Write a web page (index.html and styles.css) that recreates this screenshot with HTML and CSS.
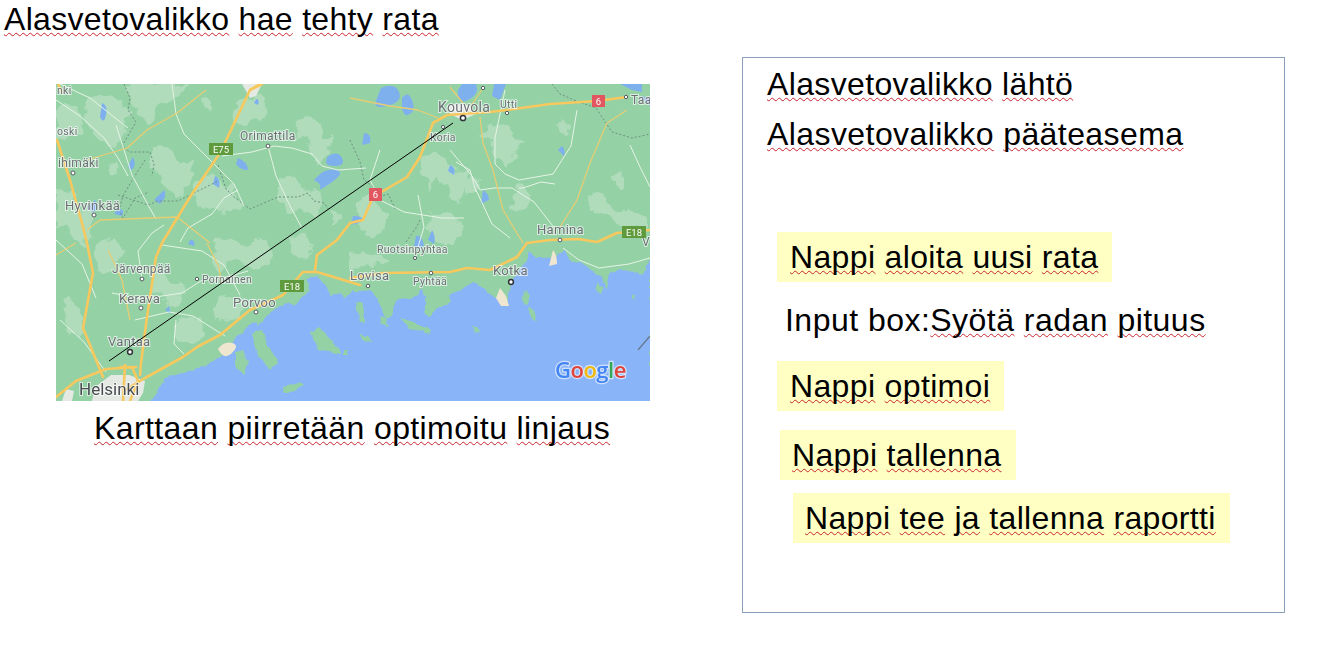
FILE: index.html
```html
<!DOCTYPE html>
<html lang="fi">
<head>
<meta charset="utf-8">
<title>Alasvetovalikko</title>
<link rel="stylesheet" href="styles.css">
</head>
<body>
<main class="page">
  <section class="left">
    <h1 class="line title"><span class="sp">Alasvetovalikko</span> <span class="sp">hae</span> <span class="sp">tehty</span> <span class="sp">rata</span></h1>
    <svg class="map" viewBox="56 84 594 317" width="594" height="317" role="img" aria-label="Kartta">
      <defs>
        <filter id="rough" x="-5%" y="-5%" width="110%" height="110%">
          <feTurbulence type="fractalNoise" baseFrequency="0.07" numOctaves="3" seed="4"/>
          <feDisplacementMap in="SourceGraphic" scale="14" xChannelSelector="R" yChannelSelector="G"/>
        </filter>
        <filter id="rough-small" x="-5%" y="-5%" width="110%" height="110%">
          <feTurbulence type="fractalNoise" baseFrequency="0.12" numOctaves="2" seed="9"/>
          <feDisplacementMap in="SourceGraphic" scale="6" xChannelSelector="R" yChannelSelector="G"/>
        </filter>
      </defs>
      <g class="soft">
        <rect class="land" x="56" y="84" width="594" height="317"/>
        <g class="light rough">
          <path d="M56 110q18-8 26 4t-4 22l-22 4z"/>
          <path d="M90 96q20-6 30 4t10 14-8 22-26 0-6-40z"/>
          <path d="M130 84h60q-6 14-22 18t-14 16-14-4-10-30z"/>
          <path d="M150 150q20-8 26 6t14 8-2 20-18 6-20-20z"/>
          <path d="M56 190q16-4 18 10t12 10 4 20-16 6-18-8z"/>
          <path d="M100 240q14-6 20 8t-6 20-16 4-4-20z"/>
          <path d="M240 100q18-8 24 4t-2 16-18 4-10-14z"/>
          <path d="M195 180q12-12 20-2t14 8 10 14-14 12-20-2-14-20z"/>
          <path d="M280 180q14-8 20 4t14 6 8 14-16 10-18-2-10-22z"/>
          <path d="M150 275q14-6 18 2t12 6 2 14-14 6-18-10z"/>
          <path d="M215 240q14-4 22 4t18-2 16 8-10 18-20-4-18 4-10-20z"/>
          <path d="M180 320q14-6 20 0t4 14-18 8-12-12z"/>
          <path d="M300 120q16-6 20 8t10 6-2 18-16 0-18-10z"/>
          <path d="M360 200q10-8 20 2t6 22-16 10-12-14z"/>
          <path d="M425 155q14-6 22 8t16 6 2 18-18 4-14-8-12-14z"/>
          <path d="M490 125q16-4 22 8t10 10-8 14-20-4-14-14z"/>
          <path d="M465 178q12-6 14 4t-2 12-12 0z"/>
          <path d="M515 185q10-6 14 10t-6 18-10-10z"/>
          <path d="M590 195q12-2 20 8t18 8 20 10v8l-30-6-26-14z"/>
          <path d="M430 215q14-6 24 4t2 20-18 4-12-12z"/>
          <path d="M290 240q10-8 18-2t6 14-14 6-12-8z"/>
          <path d="M220 300q10-8 20-4t2 14-18 12-10-12z"/>
          <path d="M350 255q16-4 30 2t-6 10-24 2z"/>
          <path d="M64 300q12-4 16 10t0 30l-14-4z"/>
          <path d="M560 120q8-4 10 6t-4 10-8-8z"/>
          <path d="M615 175q8-4 10 4t-2 10-8-4z"/>
          <path d="M260 330q8-4 12 8t0 24-10-4z"/>
          <path d="M200 100q8-2 10 6t-6 6z"/>
          <path d="M108 165q6-2 8 6t-6 4z"/>
          <path d="M330 210q6-4 10 4t-6 8z"/>
        </g>
        <g class="urban">
          <path d="M92 401l3-14 16-12 18 0 16 6-2 12-5 8z"/>
          <path d="M62 401l4-12 8 2-2 10z"/>
          <path d="M446 106q14-4 24 0l6 8-14 6-12-6z"/>
          <path d="M242 84h20l-6 12-6 2z"/>
        </g>
        <g class="water">
          <path d="M102 103q6 2 4 12t-6 2zM133 157q4 8-1 13-6 0-2-8zM164 190q4 6-4 14l-6-4zM95 200q6 8-2 12l-6-4zM118 208q8 2 4 8l-8-2z"/>
          <path d="M238 158q10 4 10 12-8 0-12-6zM215 176q6 2 4 12l-6-4zM256 99q4 0 2 6l-4-2z"/>
          <path d="M328 156q10-6 14 2t-8 8-6-10zM318 176q8-8 18-6t-4 12-12 6-6-8z"/>
          <path d="M381 88q14-6 18 4t-12 14-10-8zM402 98q6-8 10 2t-2 14-8-6zM462 84h14q4 10-8 16t-10-10zM494 84h12l-6 16-8-4zM364 133q8 0 6 10l-8 2z"/>
          <path d="M562 146q4 4 2 10l-6-6zM483 190q6 4 6 10-10 4-8 6zM450 165q6 2 4 10l-6-4z"/>
          <path d="M416 236q6-2 8 10-6 6-10 0zM353 216q10 0 10 4-8 6-12 4zM432 230q4 6 2 14l-6-4z"/>
          <path d="M620 84h22v8l-10-2zM640 96l10 2v8z"/>
          <path d="M190 240q6 0 4 6l-6-2zM165 310l4-4 2 8z"/>
        </g>
        <path class="sea rough-small" d="M150 401L160 388 166 378 188 371 205 366 222 355 232 343 240 335 247 328 252 322 258 325 262 322 270 312 280 306 288 302 296 306 300 300 310 290 308 280 317 276 325 285 330 295 340 293 345 300 352 290 360 292 370 290 378 300 385 318 392 316 395 300 405 298 412 300 420 290 430 298 450 295 460 290 473 282 483 287 493 297 507 303 512 283 520 270 527 260 527 250 537 257 553 258 563 250 570 260 583 263 597 273 607 288 610 273 623 270 643 275 650 260V405H150z"/>
        <g class="land rough-small">
          <path d="M236 352l8-2 4 12-4 12-8-6z"/>
          <path d="M252 332l10-2 6 16 10 16-8 8-12-14z"/>
          <path d="M283 386l16-4 6 4-14 6-8 0z"/>
          <path d="M310 332l10-4 12 12 10 14-14-2-10-2z"/>
          <path d="M344 350l4 0 0 6-4 0z"/>
          <path d="M356 302l6 2 2 20-4 0z"/>
          <path d="M360 333l8 4 4 6-8-2z"/>
          <path d="M380 316l6 2 2 8-6-2z"/>
          <path d="M400 318l14 4 16 8 0 4-20-6z"/>
          <path d="M425 297l24-2 2 8-12 4-10 10-4-6z"/>
          <path d="M473 326l4 2 3 6-6-2z"/>
          <path d="M525 290l4 6-3 10-3-6z"/>
          <path d="M529 308l5 2 3 12-5-2z"/>
          <path d="M597 282l6 6-2 6-6-6z"/>
          <path d="M632 295l3 2-1 4z"/>
        </g>
        <path class="sand" d="M218 349q6-8 14-6t0 10-14-4zM500 288l6 8 3 10-8 0-5-8zM553 250q4 4 4 14l-8 2z"/>
        <g class="borders">
          <path d="M124 84l6 14-2 12 8 12-14 24 8 6 20 0 4 12-2 12"/>
          <path d="M145 160l-14 22-8 14-4 14 4 8 12-20 14-6"/>
          <path d="M118 195l30 10 10-4 20 0 24-12 16-8"/>
          <path d="M218 165l8 24 8 8 16 12 14-6 14-6 20 0 10-4 6 8 10 2 6 8"/>
          <path d="M350 140l10 22 4 18 8 6 10 10 6-2 8 16"/>
          <path d="M552 84l8 10 14 6 22 8 16 24 20 6 18-4"/>
          <path d="M420 220l-4 8-10 14"/>
        </g>
        <g class="road">
          <path d="M56 100l24 16 24 22 14 20 10 18"/>
          <path d="M116 125l16 50 16 30 8 14"/>
          <path d="M172 84l4 30 8 20 22 22 28 28 10 22"/>
          <path d="M222 156l30-4 22-6 18 2 20 6 10 12 16 4 28-2"/>
          <path d="M268 146l8 30 14 30 12 22"/>
          <path d="M238 190l-14 8-12 16-24 14-8 14"/>
          <path d="M162 245l40 6 22 14 16 30"/>
          <path d="M56 240l26 24 14 34"/>
          <path d="M142 279l-4-28 14-18 12-8"/>
          <path d="M112 293l30 6 40-6 22-14 24-2 20-6"/>
          <path d="M135 320l34-8 24 4 32 20"/>
          <path d="M176 320l-2 24 10 10"/>
          <path d="M450 150l22 26 8 14 14-2 18 0 22 14 22 28"/>
          <path d="M555 184l-14-2-18 6-4 0"/>
          <path d="M505 90l-10 48 0 26 10 10 14 6 34-6 18-28 6-36"/>
          <path d="M380 150l-10 30 10 20 24 12 38 6 22 0"/>
          <path d="M476 192l-6-22-14-8"/>
          <path d="M418 195l6 32 -6 20"/>
          <path d="M476 190l16 34 18 14"/>
          <path d="M60 84l30 14 38 30"/>
          <path d="M563 248l16 12 20 8 30-4 21-6"/>
          <path d="M630 145l10 22 10 20"/>
          <path d="M60 320l24 22 22 30"/>
        </g>
        <g class="minor">
          <path d="M206 90l-29 23-30 17-20 18-40 12"/>
          <path d="M87 230l13-10 77-3 33 26"/>
          <path d="M480 117l3 26 10 27 10 40 20 33"/>
          <path d="M627 110l-20 13-17 40-13 37-17 27"/>
          <path d="M450 87l13 16M483 88l-12 18M350 98l40 8 28 4 20 8"/>
          <path d="M108 250l14 30 8 40M56 255l20-12"/>
          <path d="M207 243l12 24 2 16"/>
        </g>
        <g class="highway">
          <path d="M140 375l1-12 6-46 9-60 6-14 28-46 30-44 30-63 12-7"/>
          <path d="M57 140l13 40 13 47 4 16 6 30-10 55 20 49"/>
          <path d="M56 397l20-16 30-12 30-2"/>
          <path d="M120 367l12 0 6 14-8 20M125 365l-2 36"/>
          <path d="M125 390l20-12 38-21 14-10 23-12 30-25 33-15 20-23h14l43 13"/>
          <path d="M350 278l33-5 67-1 17-4 23 2 27-13 10-14 23-3 28-1 19 3 20-9 33-3"/>
          <path d="M315 270l2-15 20-15 13-17 13-3 10-23 34-20 13-20 13-34 14-8 43-3 17-2 43-6 47-3 30-4"/>
          <path d="M58 84l4 8M262 84l-12 6"/>
        </g>
        <g class="cities">
          <circle class="big" cx="463" cy="118" r="2.6"/>
          <circle class="big" cx="130" cy="352" r="2.4"/>
          <circle class="big" cx="511" cy="282" r="2.4"/>
          <circle cx="507" cy="113" r="1.7"/><circle cx="483" cy="88" r="1.7"/><circle cx="626" cy="97" r="1.7"/>
          <circle cx="268" cy="146" r="1.9"/><circle cx="73" cy="173" r="2"/><circle cx="94" cy="215" r="2"/>
          <circle cx="142" cy="279" r="1.9"/><circle cx="141" cy="308" r="2"/><circle cx="197" cy="279" r="1.7"/>
          <circle cx="256" cy="312" r="2"/><circle cx="443" cy="127" r="1.6"/><circle cx="560" cy="240" r="1.9"/>
          <circle cx="368" cy="286" r="1.8"/><circle cx="415" cy="258" r="1.6"/><circle cx="431" cy="273" r="1.8"/>
        </g>
        <g class="labels">
          <text class="l14" x="438" y="112">Kouvola</text>
          <text class="l11" x="500" y="108">Utti</text>
          <text class="l12" x="631" y="104">Taa</text>
          <text class="l11" x="430" y="141">Koria</text>
          <text class="l13" x="537" y="234">Hamina</text>
          <text class="l12" x="240" y="140">Orimattila</text>
          <text class="l13" x="65" y="210">Hyvinkää</text>
          <text class="l12" x="58" y="167">ihimäki</text>
          <text class="l11" x="57" y="135">oski</text>
          <text class="l11" x="57" y="94">nki</text>
          <text class="l12" x="112" y="273">Järvenpää</text>
          <text class="l13" x="119" y="303">Kerava</text>
          <text class="l11" x="202" y="283">Pornainen</text>
          <text class="l13" x="233" y="307">Porvoo</text>
          <text class="l13" x="108" y="346">Vantaa</text>
          <text class="l16" x="79" y="395">Helsinki</text>
          <text class="l13" x="350" y="280">Lovisa</text>
          <text class="l11" x="377" y="253">Ruotsinpyhtaa</text>
          <text class="l11" x="413" y="285">Pyhtää</text>
          <text class="l13" x="493" y="275">Kotka</text>
          <text class="l12" x="642" y="246">V</text>
        </g>
        <g class="shield-green">
          <rect x="209" y="143" width="24" height="12"/>
          <rect x="280" y="280" width="24" height="12"/>
          <rect x="622" y="226" width="24" height="12"/>
        </g>
        <g class="shield-red">
          <rect x="592" y="95" width="13" height="12"/>
          <rect x="369" y="188" width="13" height="13"/>
        </g>
        <g class="shield-text">
          <text x="221" y="153">E75</text>
          <text x="292" y="290">E18</text>
          <text x="634" y="236">E18</text>
          <text x="598.500" y="105">6</text>
          <text x="375.500" y="198">6</text>
        </g>
        <text class="google" x="555" y="378"><tspan class="g-blue">G</tspan><tspan class="g-red">o</tspan><tspan class="g-yellow">o</tspan><tspan class="g-blue">g</tspan><tspan class="g-green">l</tspan><tspan class="g-red">e</tspan></text>
        <line class="tick" x1="638" y1="350" x2="650" y2="336"/>
      </g>
      <line class="track" x1="109" y1="361" x2="453" y2="123"/>
    </svg>
    <p class="line caption"><span class="sp">Karttaan</span> <span class="sp">piirretään</span> <span class="sp">optimoitu</span> <span class="sp">linjaus</span></p>
  </section>
  <section class="panel">
    <p class="line drop"><span class="sp">Alasvetovalikko</span> <span class="sp">lähtö</span></p>
    <p class="line drop second"><span class="sp">Alasvetovalikko</span> <span class="sp">pääteasema</span></p>
    <div class="btn b-new"><span class="sp">Nappi</span> <span class="sp">aloita</span> <span class="sp">uusi</span> <span class="sp">rata</span></div>
    <p class="line input">Input box:<span class="sp">Syötä</span> <span class="sp">radan</span> <span class="sp">pituus</span></p>
    <div class="btn b-opt"><span class="sp">Nappi</span> <span class="sp">optimoi</span></div>
    <div class="btn b-save"><span class="sp">Nappi</span> <span class="sp">tallenna</span></div>
    <div class="btn b-report"><span class="sp">Nappi</span> <span class="sp">tee</span> <span class="sp">ja</span> <span class="sp">tallenna</span> <span class="sp">raportti</span></div>
  </section>
</main>
</body>
</html>
```
FILE: styles.css
```css
html, body { margin: 0; padding: 0; background: #fff; }
body { font-family: "Liberation Sans", Arial, sans-serif; color: #000; overflow: hidden; }
.page { display: flex; align-items: flex-start; width: 1321px; height: 648px; }
.left { width: 742px; flex: none; }
.line, .btn { margin: 0; font-size: 32px; line-height: 40px; font-weight: 400; white-space: nowrap; letter-spacing: .35px; }
.sp { text-decoration: underline wavy #c8242c 1px; text-underline-offset: 2px; text-decoration-skip-ink: none; }

.title { height: 40px; margin-top: -1px; padding-left: 4px; letter-spacing: .32px; }
.map { display: block; margin: 45px 0 0 56px; }
.caption { margin: 7px 0 0 94px; letter-spacing: .39px; }

.panel { flex: none; box-sizing: border-box; width: 543px; height: 556px; margin-top: 57px; border: 1px solid #8aa0bd; padding-top: 6px; }
.drop { margin-left: 24px; }
.second { margin-top: 10px; letter-spacing: .42px; }
.btn { box-sizing: border-box; height: 50px; padding: 5px 0 5px 13px; background: #ffffc4; }
.b-new { width: 335px; margin: 78px 0 0 34px; }
.input { margin: 18px 0 0 42px; letter-spacing: .47px; }
.b-opt { width: 227px; margin: 21px 0 0 34px; }
.b-save { width: 236px; margin: 19px 0 0 37px; padding-left: 12px; }
.b-report { width: 437px; margin: 13px 0 0 50px; padding-left: 12px; }

.soft { filter: blur(.5px); }
.rough { filter: url(#rough); }
.rough-small { filter: url(#rough-small); }
.land { fill: #94d2a6; }
.light path { fill: #b0dcbc; }
.urban path { fill: #e4e9e4; }
.water path { fill: #7fb0ee; }
.sea { fill: #8ab4f8; }
.sand { fill: #efe6d0; }
.borders path { fill: none; stroke: #6f8f80; stroke-width: 1; stroke-dasharray: 2 2; }
.road path { fill: none; stroke: #e6f3e6; stroke-width: 1; stroke-linejoin: round; }
.minor path { fill: none; stroke: #e6cd74; stroke-width: 1.3; stroke-linejoin: round; }
.highway path { fill: none; stroke: #f7c85e; stroke-width: 2.6; stroke-linejoin: round; stroke-linecap: round; }
.cities circle { fill: #fff; stroke: #555b5e; stroke-width: 1; }
.cities .big { stroke: #30343a; stroke-width: 1.5; }
.labels text { fill: #6b7074; stroke: #fff; stroke-opacity: .65; stroke-width: 2px; paint-order: stroke; font-family: Roboto, sans-serif; }
.l11 { font-size: 10.500px; letter-spacing: .3px; }
.l12 { font-size: 12px; letter-spacing: .3px; }
.l13 { font-size: 13px; letter-spacing: .3px; }
.l14 { font-size: 14px; letter-spacing: .3px; }
.labels .l16 { font-size: 17px; font-weight: 400; fill: #4a4d52; }
.shield-green rect { fill: #5f9a3c; }
.shield-red rect { fill: #e2575f; }
.shield-text text { fill: #fff; font-family: Roboto, sans-serif; font-size: 9.500px; text-anchor: middle; }
.google { font-family: "Open Sans", sans-serif; font-size: 22px; font-weight: 600; stroke: #fff; stroke-opacity: .6; stroke-width: 2.5px; paint-order: stroke; letter-spacing: -.5px; }
.g-blue { fill: #4285f4; }
.g-red { fill: #e0453a; }
.g-yellow { fill: #f0b90b; }
.g-green { fill: #34a853; }
.tick { stroke: #66778c; stroke-width: 1.2; }
.track { stroke: #000; stroke-width: 1; }
```
